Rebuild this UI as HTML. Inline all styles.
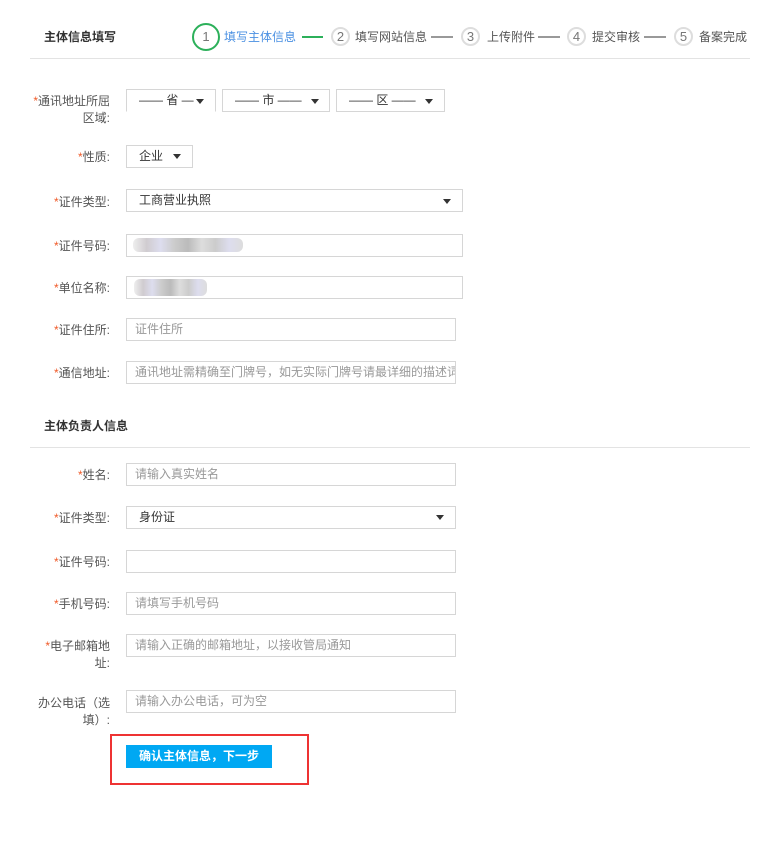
<!DOCTYPE html>
<html><head><meta charset="utf-8"><style>
body{margin:0;width:762px;height:843px;background:#fff;font-family:"Liberation Sans","Noto Sans CJK SC",sans-serif;font-size:12px;color:#555;position:relative;overflow:hidden}
.a{position:absolute;white-space:nowrap}
.lb{position:absolute;right:652px;text-align:right;line-height:17px;white-space:nowrap}
.lb i{font-style:normal;color:#f05a28}
.bx{position:absolute;border:1px solid #d6d6d6;box-sizing:border-box;height:23px;line-height:21px;padding-left:8px;color:#999;white-space:nowrap;overflow:hidden}
.sel{color:#333;padding-left:12px}
.tri{position:absolute;top:9px;width:0;height:0;border-left:4px solid transparent;border-right:4px solid transparent;border-top:5px solid #333}
.c{position:absolute;border:2px solid #ddd;border-radius:50%;box-sizing:border-box;text-align:center;color:#777;font-size:13px}
.ln{position:absolute;height:2px;background:#999;top:36px}
.st{position:absolute;top:28px;color:#555}
.hr{position:absolute;left:30px;width:720px;height:1px;background:#e3e3e3}
.blur{position:absolute;height:14px;background:linear-gradient(90deg,#eee,#d0ccd0,#dde,#ccc,#bbb,#ddd,#ccc,#dde,#ddd);border-radius:6px}
</style></head><body>
<div class="a" style="left:44px;top:28px;font-weight:bold;color:#333;font-size:12px">主体信息填写</div>
<div class="c" style="left:192px;top:23px;width:28px;height:28px;line-height:24px;border-color:#2cb05a;color:#777">1</div>
<div class="st" style="left:224px;color:#4a90e2">填写主体信息</div>
<div class="ln" style="left:302px;width:21px;background:#2cb05a"></div>
<div class="c" style="left:331px;top:27px;width:19px;height:19px;line-height:15px">2</div>
<div class="st" style="left:355px">填写网站信息</div>
<div class="ln" style="left:431px;width:22px"></div>
<div class="c" style="left:461px;top:27px;width:19px;height:19px;line-height:15px">3</div>
<div class="st" style="left:487px">上传附件</div>
<div class="ln" style="left:538px;width:22px"></div>
<div class="c" style="left:567px;top:27px;width:19px;height:19px;line-height:15px">4</div>
<div class="st" style="left:592px">提交审核</div>
<div class="ln" style="left:644px;width:22px"></div>
<div class="c" style="left:674px;top:27px;width:19px;height:19px;line-height:15px">5</div>
<div class="st" style="left:699px">备案完成</div>
<div class="hr" style="top:58px"></div>

<div class="lb" style="top:93px"><i>*</i>通讯地址所屈<br>区域:</div>
<div class="bx sel" style="left:126px;top:89px;width:90px;border-bottom-color:#fff">—— 省 —</div><div class="tri" style="left:196px;top:99px"></div>
<div class="bx sel" style="left:222px;top:89px;width:108px">—— 市 ——</div><div class="tri" style="left:311px;top:99px"></div>
<div class="bx sel" style="left:336px;top:89px;width:109px">—— 区 ——</div><div class="tri" style="left:425px;top:99px"></div>

<div class="lb" style="top:149px"><i>*</i>性质:</div>
<div class="bx sel" style="left:126px;top:145px;width:67px">企业</div><div class="tri" style="left:173px;top:154px"></div>

<div class="lb" style="top:194px"><i>*</i>证件类型:</div>
<div class="bx sel" style="left:126px;top:189px;width:337px">工商营业执照</div><div class="tri" style="left:443px;top:199px"></div>

<div class="lb" style="top:238px"><i>*</i>证件号码:</div>
<div class="bx" style="left:126px;top:234px;width:337px"></div><div class="blur" style="left:133px;top:238px;width:110px"></div>
<div class="lb" style="top:280px"><i>*</i>单位名称:</div>
<div class="bx" style="left:126px;top:276px;width:337px"></div><div class="blur" style="left:134px;top:279px;width:73px;height:17px"></div>
<div class="lb" style="top:322px"><i>*</i>证件住所:</div>
<div class="bx" style="left:126px;top:318px;width:330px">证件住所</div>
<div class="lb" style="top:365px"><i>*</i>通信地址:</div>
<div class="bx" style="left:126px;top:361px;width:330px">通讯地址需精确至门牌号，如无实际门牌号请最详细的描述词</div>

<div class="a" style="left:44px;top:417px;font-weight:bold;color:#333">主体负责人信息</div>
<div class="hr" style="top:447px"></div>

<div class="lb" style="top:467px"><i>*</i>姓名:</div>
<div class="bx" style="left:126px;top:463px;width:330px">请输入真实姓名</div>
<div class="lb" style="top:510px"><i>*</i>证件类型:</div>
<div class="bx sel" style="left:126px;top:506px;width:330px">身份证</div><div class="tri" style="left:436px;top:515px"></div>
<div class="lb" style="top:554px"><i>*</i>证件号码:</div>
<div class="bx" style="left:126px;top:550px;width:330px"></div>
<div class="lb" style="top:596px"><i>*</i>手机号码:</div>
<div class="bx" style="left:126px;top:592px;width:330px">请填写手机号码</div>
<div class="lb" style="top:638px"><i>*</i>电子邮箱地<br>址:</div>
<div class="bx" style="left:126px;top:634px;width:330px">请输入正确的邮箱地址，以接收管局通知</div>
<div class="lb" style="top:695px">办公电话（选<br>填）:</div>
<div class="bx" style="left:126px;top:690px;width:330px">请输入办公电话，可为空</div>

<div class="a" style="left:110px;top:734px;width:199px;height:51px;border:2px solid #ee3333;box-sizing:border-box"></div>
<div class="a" style="left:126px;top:745px;width:146px;height:23px;background:#00a8f3;color:#fff;text-align:center;line-height:23px;font-weight:bold">确认主体信息，下一步</div>
</body></html>
